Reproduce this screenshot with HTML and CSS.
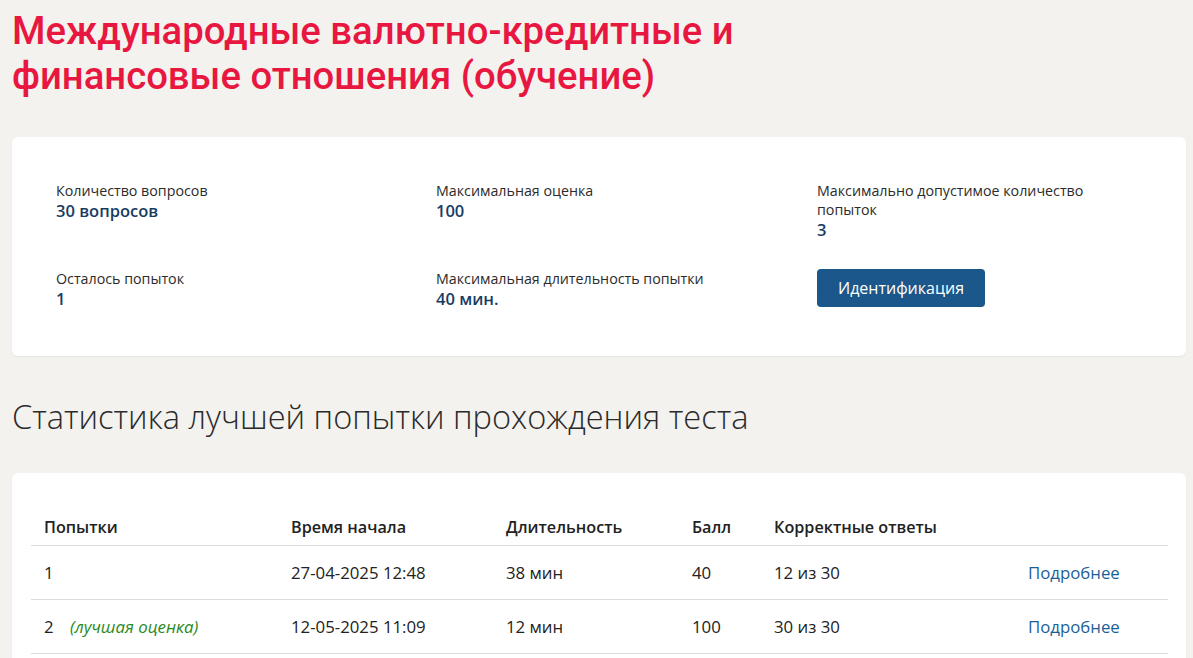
FILE: index.html
```html
<!DOCTYPE html>
<html lang="ru">
<head>
<meta charset="utf-8">
<title>Тест</title>
<link rel="stylesheet" href="styles.css">
</head>
<body>
<div class="page">
  <h1 class="title">Международные валютно-кредитные и<br>финансовые отношения (обучение)</h1>

  <section class="card info">
    <div class="info-grid">
      <div class="item">
        <div class="label">Количество вопросов</div>
        <div class="value">30 вопросов</div>
      </div>
      <div class="item">
        <div class="label">Максимальная оценка</div>
        <div class="value">100</div>
      </div>
      <div class="item">
        <div class="label">Максимально допустимое количество<br>попыток</div>
        <div class="value">3</div>
      </div>
      <div class="item">
        <div class="label">Осталось попыток</div>
        <div class="value">1</div>
      </div>
      <div class="item">
        <div class="label">Максимальная длительность попытки</div>
        <div class="value">40 мин.</div>
      </div>
      <div class="item">
        <button class="btn">Идентификация</button>
      </div>
    </div>
  </section>

  <h2 class="subtitle">Статистика лучшей попытки прохождения теста</h2>

  <section class="card stats">
    <table class="table">
      <colgroup>
        <col class="c1"><col class="c2"><col class="c3"><col class="c4"><col class="c5"><col class="c6">
      </colgroup>
      <thead>
        <tr>
          <th>Попытки</th>
          <th>Время начала</th>
          <th>Длительность</th>
          <th>Балл</th>
          <th>Корректные ответы</th>
          <th></th>
        </tr>
      </thead>
      <tbody>
        <tr>
          <td>1</td>
          <td>27-04-2025 12:48</td>
          <td>38 мин</td>
          <td>40</td>
          <td>12 из 30</td>
          <td><a class="link" href="#">Подробнее</a></td>
        </tr>
        <tr>
          <td>2 <span class="best">(лучшая оценка)</span></td>
          <td>12-05-2025 11:09</td>
          <td>12 мин</td>
          <td>100</td>
          <td>30 из 30</td>
          <td><a class="link" href="#">Подробнее</a></td>
        </tr>
      </tbody>
    </table>
  </section>
</div>
</body>
</html>
```

FILE: styles.css
```css
html, body {
  margin: 0;
  padding: 0;
  background: #f3f2ef;
}
body {
  font-family: "Open Sans", "Noto Sans", sans-serif;
  color: #222;
  font-size: 15px;
}
.page {
  padding: 0 7px 0 12px;
}
.title {
  margin: 0;
  padding-top: 8px;
  font-family: "Roboto", sans-serif;
  font-weight: 500;
  font-size: 38.3px;
  line-height: 45px;
  color: #e8173f;
}
.card {
  background: #fff;
  border-radius: 6px;
  box-shadow: 0 1px 2px rgba(0,0,0,0.06);
}
.info {
  margin-top: 39px;
  padding: 44px 20px 47px 44px;
}
.info-grid {
  display: grid;
  grid-template-columns: 380px 381px 1fr;
  row-gap: 29px;
}
.label {
  font-size: 14.25px;
  line-height: 19px;
  color: #2b2b2b;
}
.value {
  font-size: 16.5px;
  font-weight: 600;
  line-height: 20px;
  margin-top: 1px;
  color: #173c63;
}
.btn {
  margin-top: 0;
  height: 38px;
  width: 168px;
  padding: 0;
  border: none;
  border-radius: 4px;
  background: #1b578a;
  color: #fff;
  font-family: "Open Sans", sans-serif;
  font-size: 16px;
  cursor: pointer;
}
.subtitle {
  margin: 39px 0 0;
  font-family: "Open Sans", sans-serif;
  font-weight: 300;
  font-size: 32.6px;
  line-height: 44px;
  color: #2a2a2a;
}
.stats {
  margin-top: 34px;
  padding: 43px 18px 10px 19px;
}
.table {
  width: 100%;
  border-collapse: collapse;
  table-layout: fixed;
}
.c1 { width: 247px; }
.c2 { width: 215px; }
.c3 { width: 186px; }
.c4 { width: 82px; }
.c5 { width: 254px; }
.table th, .table td {
  text-align: left;
  padding: 0 13px;
  border-bottom: 1px solid #dedcd7;
  height: 53px;
  font-size: 16.8px;
}
.table th {
  font-size: 16.2px;
  font-weight: 600;
  height: 29px;
  line-height: 22px;
  vertical-align: top;
  color: #222;
}
.best {
  margin-left: 12px;
  font-style: italic;
  color: #2a8a1c;
}
.link {
  color: #1b5f98;
  text-decoration: none;
}
```
